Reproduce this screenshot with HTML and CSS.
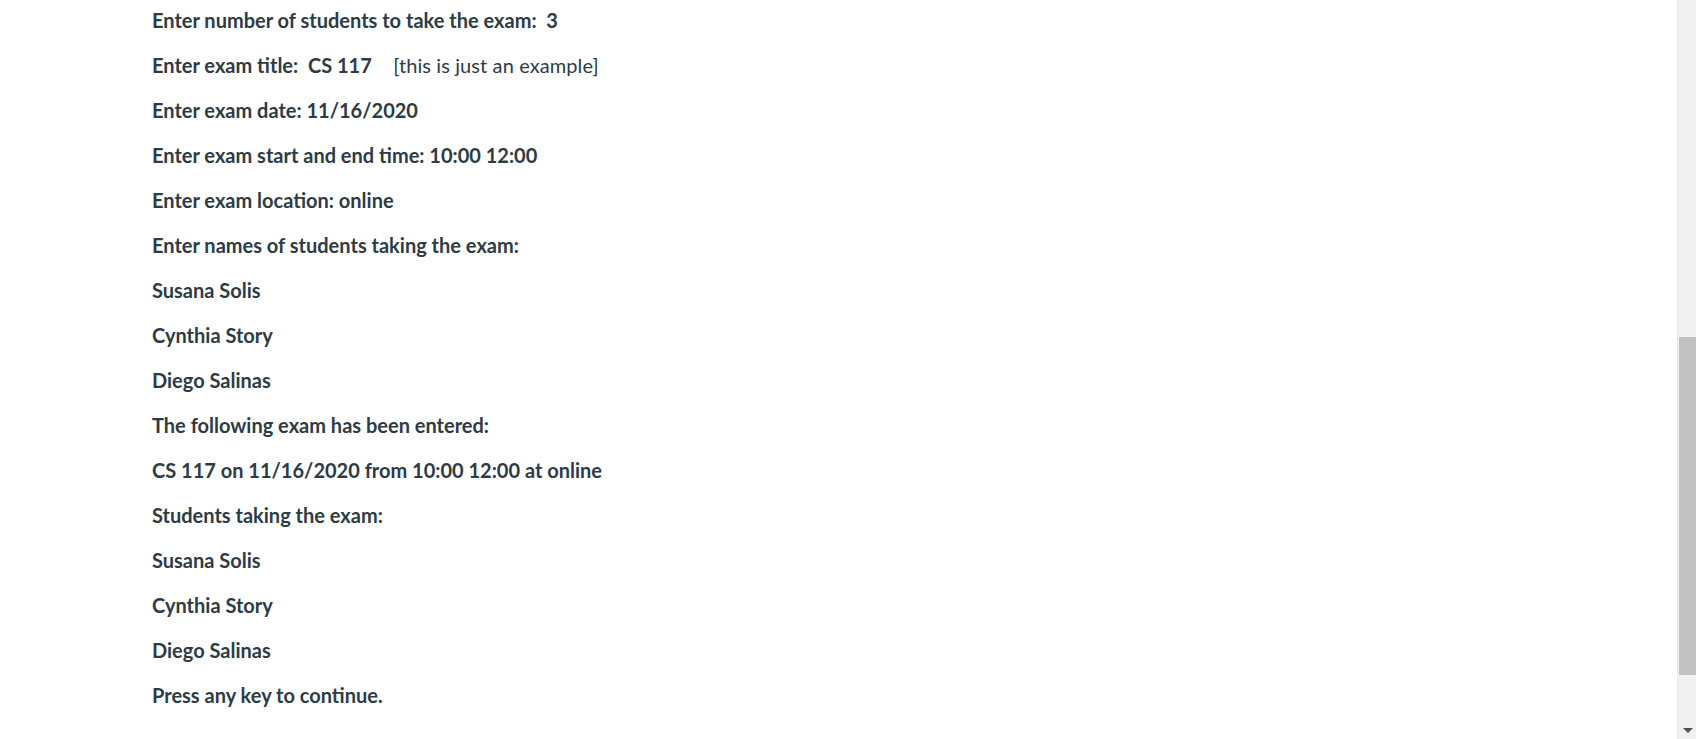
FILE: index.html
```html
<!DOCTYPE html>
<html lang="en">
<head>
<meta charset="utf-8">
<title>Exam</title>
<link rel="stylesheet" href="styles.css">
</head>
<body>
<main class="content">
  <p>Enter number of students to take the exam:&nbsp; 3</p>
  <p>Enter exam title:&nbsp; CS 117&nbsp;&nbsp;&nbsp; <span class="note">[this is just an example]</span></p>
  <p>Enter exam date: 11/16/2020</p>
  <p>Enter exam start and end time: 10:00 12:00</p>
  <p>Enter exam location: online</p>
  <p>Enter names of students taking the exam:</p>
  <p>Susana Solis</p>
  <p>Cynthia Story</p>
  <p>Diego Salinas</p>
  <p>The following exam has been entered:</p>
  <p>CS 117 on 11/16/2020 from 10:00 12:00 at online</p>
  <p>Students taking the exam:</p>
  <p>Susana Solis</p>
  <p>Cynthia Story</p>
  <p>Diego Salinas</p>
  <p>Press any key to continue.</p>
</main>
<div class="scrollbar" aria-hidden="true">
  <div class="thumb"></div>
  <div class="arrow"></div>
</div>
</body>
</html>
```
FILE: styles.css
```css
html, body {
  margin: 0;
  padding: 0;
  background: #ffffff;
  overflow: hidden;
  height: 100%;
}
body {
  font-family: Lato, "Open Sans", "Liberation Sans", sans-serif;
  color: #2d3b45;
}
.content {
  padding: 7px 0 0 152px;
}
.content p {
  margin: 0 0 18px;
  font-size: 20px;
  line-height: 27px;
  font-weight: 700;
}
.note {
  font-weight: 400;
  margin-left: 2px;
  letter-spacing: 0.1px;
}
.scrollbar {
  position: fixed;
  top: 0;
  right: 0;
  width: 18px;
  height: 100%;
  background: #f1f1f1;
  border-left: 1px solid #e8e8e8;
}
.thumb {
  position: absolute;
  left: 1px;
  right: 0;
  top: 337px;
  height: 338px;
  background: #c1c1c1;
}
.arrow {
  position: absolute;
  left: 5px;
  bottom: 6px;
  width: 0;
  height: 0;
  border-left: 5px solid transparent;
  border-right: 5px solid transparent;
  border-top: 5px solid #505050;
}
```
